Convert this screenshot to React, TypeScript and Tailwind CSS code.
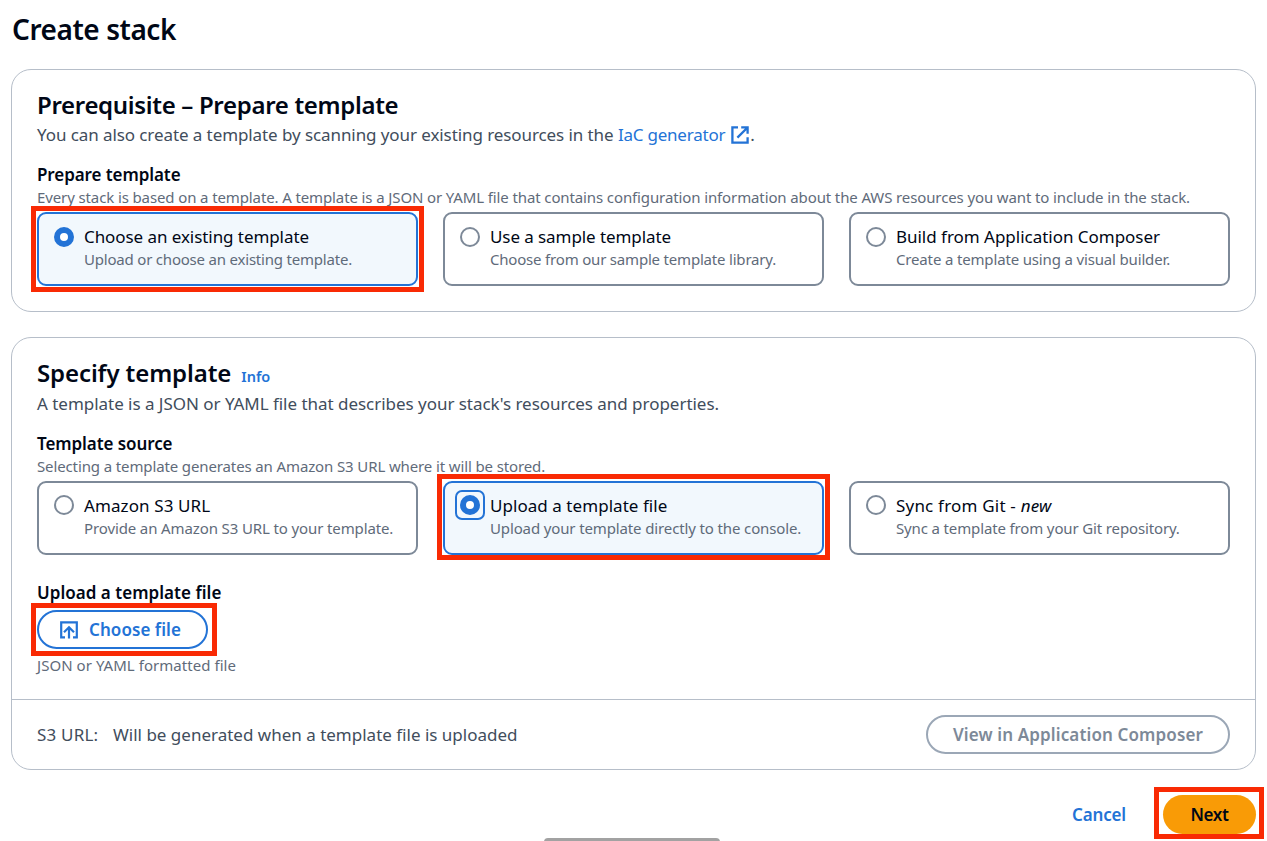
import type { ReactNode } from 'react';

function Highlight({ className }: { className: string }) {
  return <span aria-hidden="true" className={`pointer-events-none absolute border-[5px] border-[#f92a04] ${className}`} />;
}

function Radio({ checked, focused, className }: { checked?: boolean; focused?: boolean; className: string }) {
  return (
    <span
      className={`relative block size-5 shrink-0 rounded-full bg-white ${className} ${
        checked ? 'border-[6px] border-[#2373d6]' : 'border-2 border-[#7d8998]'
      }`}
    >
      {focused && <span className="absolute -inset-[11px] rounded-[7px] border-2 border-[#2373d6]" />}
    </span>
  );
}

type TileProps = {
  title: ReactNode;
  titleClass: string;
  description: string;
  descriptionClass: string;
  radioClass?: string;
  checked?: boolean;
  focused?: boolean;
  highlight?: string;
};

function Tile({
  title,
  titleClass,
  description,
  descriptionClass,
  radioClass = 'mt-[3px]',
  checked,
  focused,
  highlight,
}: TileProps) {
  return (
    <label
      className={`relative flex h-[74px] gap-[10px] rounded-[9px] border-2 pt-[10px] pl-[15px] ${
        checked ? 'border-[#2373d6] bg-[#f2f8fd]' : 'border-[#7d8998] bg-white'
      }`}
    >
      <Radio checked={checked} focused={focused} className={radioClass} />
      <span className="flex flex-col whitespace-nowrap">
        <span className={`text-[17px] leading-[25px] text-[#000716] ${titleClass}`}>{title}</span>
        <span className={`text-[15px] leading-[20px] text-[#5f6b7a] ${descriptionClass}`}>{description}</span>
      </span>
      {highlight && <Highlight className={highlight} />}
    </label>
  );
}

function ExternalIcon() {
  return (
    <svg viewBox="0 0 20 20" className="ml-[5px] inline-block size-5 align-[-4px]" fill="none" stroke="#2373d6" strokeWidth="2.3">
      <path d="M8 2.4H2.4v15.2h15.2v-5.4" />
      <path d="M11.2 2.4h6.4v6.4M17.3 2.7 7.4 12.6" />
    </svg>
  );
}

function UploadIcon() {
  return (
    <svg viewBox="0 0 20 20" className="size-5" fill="none" stroke="#2373d6" strokeWidth="2.2">
      <path d="M6 17.4H2.2V2.4h15.6v15H14" />
      <path d="M10 18.5V7.2M5 12.2l5-5 5 5" />
    </svg>
  );
}

export default function App() {
  return (
    <main
      className="flex h-[841px] w-[1267px] flex-col overflow-hidden bg-white px-[11px] text-[17px] text-[#414d5c]"
      style={{ fontFamily: '"Noto Sans", sans-serif' }}
    >
      <h1 className="mt-[9px] h-[40px] shrink-0 pl-px text-[28px] leading-[40px] font-semibold tracking-[-0.443px] text-[#000716]">
        Create stack
      </h1>

      <section className="mt-[20px] h-[243px] shrink-0 rounded-[20px] border border-[#b6bec9] px-[25px] pt-5">
        <h2 className="text-[24px] leading-[30px] font-semibold tracking-[-0.32px] text-[#000716]">
          Prerequisite – Prepare template
        </h2>
        <p className="mt-[2px] h-[25px] leading-[25px] whitespace-nowrap tracking-[-0.085px]">
          You can also create a template by scanning your existing resources in the{' '}
          <a className="tracking-[-0.22px] text-[#2373d6]">
            IaC generator
            <ExternalIcon />
          </a>
          .
        </p>
        <h3 className="mt-[15px] leading-[25px] font-semibold tracking-[-0.08px] text-[#000716]">Prepare template</h3>
        <p className="text-[15px] leading-[20px] whitespace-nowrap tracking-[-0.117px] text-[#5f6b7a]">
          Every stack is based on a template. A template is a JSON or YAML file that contains configuration information
          about the AWS resources you want to include in the stack.
        </p>
        <div className="mt-[5px] grid grid-cols-3 gap-[25px]">
          <Tile
            checked
            title="Choose an existing template"
            titleClass="tracking-[-0.068px]"
            description="Upload or choose an existing template."
            descriptionClass="tracking-[-0.203px]"
            highlight="-top-[8px] -left-[8px] h-[86px] w-[393px]"
          />
          <Tile
            title="Use a sample template"
            titleClass="tracking-[-0.08px]"
            description="Choose from our sample template library."
            descriptionClass="tracking-[-0.194px]"
          />
          <Tile
            title="Build from Application Composer"
            titleClass="tracking-[-0.023px]"
            description="Create a template using a visual builder."
            descriptionClass="tracking-[-0.157px]"
          />
        </div>
      </section>

      <section className="mt-[25px] flex h-[433px] shrink-0 flex-col rounded-[20px] border border-[#b6bec9]">
        <div className="h-[361px] px-[25px] pt-5">
          <h2 className="flex h-[30px] items-baseline text-[24px] leading-[30px] font-semibold tracking-[-0.1px] text-[#000716]">
            Specify template
            <a className="ml-[10px] text-[14.5px] tracking-[0px] text-[#2373d6]">Info</a>
          </h2>
          <p className="mt-[3px] leading-[25px] tracking-[-0.032px]">
            A template is a JSON or YAML file that describes your stack's resources and properties.
          </p>
          <h3 className="mt-[15px] leading-[25px] font-semibold tracking-[-0.08px] text-[#000716]">Template source</h3>
          <p className="text-[15px] leading-[20px] tracking-[-0.122px] text-[#5f6b7a]">
            Selecting a template generates an Amazon S3 URL where it will be stored.
          </p>
          <div className="mt-[5px] grid grid-cols-3 gap-[25px]">
            <Tile
              title="Amazon S3 URL"
              titleClass="tracking-[0.1px]"
              description="Provide an Amazon S3 URL to your template."
              descriptionClass="tracking-[-0.12px]"
              radioClass="mt-[2px]"
            />
            <Tile
              checked
              focused
              title="Upload a template file"
              titleClass="tracking-[0.05px]"
              description="Upload your template directly to the console."
              descriptionClass="tracking-[-0.13px]"
              radioClass="mt-[2px]"
              highlight="-top-[9px] -left-[8px] h-[86px] w-[393px]"
            />
            <Tile
              title={
                <>
                  Sync from Git - <i>new</i>
                </>
              }
              titleClass="tracking-[0.2px]"
              description="Sync a template from your Git repository."
              descriptionClass="tracking-[-0.14px]"
              radioClass="mt-[2px]"
            />
          </div>
          <h3 className="mt-[25px] leading-[25px] font-semibold tracking-[0.03px] text-[#000716]">Upload a template file</h3>
          <div className="relative mt-[5px] w-[171px]">
            <button className="flex h-[39px] w-full items-center gap-[10px] rounded-full border-2 border-[#2373d6] pl-5 font-semibold tracking-[0.065px] text-[#2373d6]">
              <UploadIcon />
              Choose file
            </button>
            <Highlight className="-top-[7px] -left-[6px] h-[53px] w-[186px]" />
          </div>
          <p className="mt-[6px] text-[15px] leading-[20px] tracking-[0.05px] text-[#5f6b7a]">JSON or YAML formatted file</p>
        </div>
        <div className="flex flex-1 items-center border-t border-[#b6bec9] px-[25px]">
          <span className="w-[76px] tracking-[0.2px]">S3 URL:</span>
          <span>Will be generated when a template file is uploaded</span>
          <button className="ml-auto h-[39px] w-[304px] rounded-full border-2 border-[#9ba7b6] font-semibold tracking-[0.124px] text-[#7d8998]">
            View in Application Composer
          </button>
        </div>
      </section>

      <footer className="mt-[25px] flex shrink-0 items-center justify-end">
        <button className="mr-[37px] font-semibold tracking-[-0.154px] text-[#2373d6]">Cancel</button>
        <div className="relative">
          <button className="block h-[39px] w-[93px] rounded-full bg-[#f99b06] font-semibold tracking-[-0.377px] text-[#000716]">
            Next
          </button>
          <Highlight className="-top-[8px] -left-[9px] h-[52px] w-[110px]" />
        </div>
      </footer>
      <div className="mt-[4px] ml-[533px] h-[6px] w-[176px] shrink-0 rounded-t-[4px] bg-[#a2a2a2]" />
    </main>
  );
}
